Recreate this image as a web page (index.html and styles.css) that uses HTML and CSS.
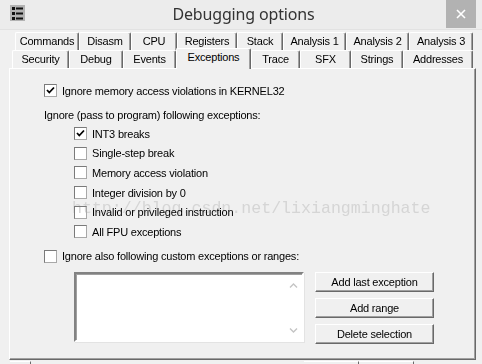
FILE: index.html
```html
<!DOCTYPE html>
<html lang="en">
<head>
  <meta charset="UTF-8" />
  <title>Debugging options</title>
  <link rel="stylesheet" href="styles.css">
</head>
<body>
  <div class="window">
    <div class="titlebar">
      <svg class="app-icon" width="15" height="16" viewBox="0 0 15 16">
        <rect width="15" height="16" fill="#b3b3b3"/>
        <rect x="2" y="2" width="3" height="3" fill="#111"/>
        <rect x="6" y="2.5" width="7" height="2" fill="#111"/>
        <rect x="2" y="7" width="3" height="3" fill="#111"/>
        <rect x="6" y="7.5" width="7" height="2" fill="#111"/>
        <rect x="2" y="12" width="3" height="3" fill="#111"/>
        <rect x="6" y="12.5" width="7" height="2" fill="#111"/>
      </svg>
      <div class="title">Debugging options</div>
      <div class="close">
        <svg width="10" height="10" viewBox="0 0 10 10">
          <path d="M1 1 L9 9 M9 1 L1 9" stroke="#fff" stroke-width="1.6"/>
        </svg>
      </div>
    </div>

    <div class="client">
      <div class="tabs">
        <div class="tabrow back">
          <div class="tab">Commands</div>
          <div class="tab">Disasm</div>
          <div class="tab">CPU</div>
          <div class="tab">Registers</div>
          <div class="tab">Stack</div>
          <div class="tab">Analysis 1</div>
          <div class="tab">Analysis 2</div>
          <div class="tab">Analysis 3</div>
        </div>
        <div class="tabrow front">
          <div class="tab">Security</div>
          <div class="tab">Debug</div>
          <div class="tab">Events</div>
          <div class="tab selected">Exceptions</div>
          <div class="tab">Trace</div>
          <div class="tab">SFX</div>
          <div class="tab">Strings</div>
          <div class="tab">Addresses</div>
        </div>
      </div>

      <div class="panel">
        <div class="row">
          <span class="check on"><svg width="11" height="11" viewBox="0 0 11 11"><path d="M2 5 L4.3 7.5 L9 2.5" fill="none" stroke="#000" stroke-width="1.8"/></svg></span>
          <span>Ignore memory access violations in KERNEL32</span>
        </div>

        <div class="caption">Ignore (pass to program) following exceptions:</div>

        <div class="sub">
          <div class="row">
            <span class="check on"><svg width="11" height="11" viewBox="0 0 11 11"><path d="M2 5 L4.3 7.5 L9 2.5" fill="none" stroke="#000" stroke-width="1.8"/></svg></span>
            <span>INT3 breaks</span>
          </div>
          <div class="row">
            <span class="check"></span>
            <span>Single-step break</span>
          </div>
          <div class="row">
            <span class="check"></span>
            <span>Memory access violation</span>
          </div>
          <div class="row">
            <span class="check"></span>
            <span>Integer division by 0</span>
          </div>
          <div class="row">
            <span class="check"></span>
            <span>Invalid or privileged instruction</span>
          </div>
          <div class="row">
            <span class="check"></span>
            <span>All FPU exceptions</span>
          </div>
        </div>

        <div class="row custom">
          <span class="check"></span>
          <span>Ignore also following custom exceptions or ranges:</span>
        </div>

        <div class="ranges">
          <div class="listbox">
            <div class="list-body"></div>
            <div class="scrollbar">
              <svg width="9" height="5" viewBox="0 0 9 5"><path d="M1 4.5 L4.5 1 L8 4.5" fill="none" stroke="#c4c4c4" stroke-width="1.4"/></svg>
              <svg width="9" height="5" viewBox="0 0 9 5"><path d="M1 0.5 L4.5 4 L8 0.5" fill="none" stroke="#c4c4c4" stroke-width="1.4"/></svg>
            </div>
          </div>
          <div class="buttons">
            <div class="button">Add last exception</div>
            <div class="button">Add range</div>
            <div class="button">Delete selection</div>
          </div>
        </div>
      </div>

      <div class="footer">
        <span class="btn-top first"></span>
        <span class="btn-top ok"></span>
        <span class="btn-top"></span>
      </div>
    </div>

    <div class="watermark">http://blog.csdn.net/lixiangminghate</div>
  </div>
</body>
</html>
```

FILE: styles.css
```css
body {
  margin: 0;
  width: 482px;
  height: 364px;
  overflow: hidden;
  background-color: #f0f0f0;
  font-family: "Liberation Sans", Arial, sans-serif;
  font-size: 11px;
  letter-spacing: -0.2px;
  color: #000;
}
.window {
  position: relative;
  height: 364px;
}

/* title bar */
.titlebar {
  height: 29px;
  display: flex;
  align-items: flex-start;
  background-color: #ececec;
  border-bottom: 1px solid #e2e2e2;
}
.app-icon {
  margin: 5px 0 0 10px;
}
.title {
  flex: 1;
  text-align: center;
  font-family: "Noto Sans", "Open Sans", sans-serif;
  font-size: 16px;
  letter-spacing: -0.15px;
  line-height: 29px;
  color: #333;
  padding-left: 16px;
}
.close {
  width: 30px;
  height: 28px;
  margin-right: 6px;
  background-color: #b2b2b2;
  display: flex;
  align-items: center;
  justify-content: center;
}

/* tabs */
.tabs {
  padding-top: 2px;
}
.tabrow {
  display: grid;
  height: 18px;
}
.tabrow.back {
  margin-left: 15px;
  grid-template-columns: 64px 52px 46px 60px 46px 63px 63px 64px;
}
.tabrow.front {
  margin-left: 12px;
  grid-template-columns: 57px 54px 53px 75px 49px 51px 52px 70px;
}
.tab {
  border-left: 1px solid #fff;
  border-top: 1px solid #fff;
  border-right: 1px solid #696969;
  box-shadow: inset -1px 0 0 #a0a0a0;
  border-radius: 2px 2px 0 0;
  text-align: center;
  line-height: 17px;
  white-space: nowrap;
  background-color: #f0f0f0;
}
.tab.selected {
  position: relative;
  z-index: 2;
  margin-top: -2px;
  margin-bottom: -1px;
  line-height: 16px;
}

/* tab page */
.panel {
  height: 275px;
  margin-left: 9px;
  width: 431px;
  padding: 15px 0 0 34px;
  border-top: 1px solid #fff;
  border-left: 1px solid #fff;
  border-right: 1px solid #696969;
  border-bottom: 1px solid #696969;
  box-shadow: inset -1px -1px 0 #a0a0a0;
}
.row {
  display: flex;
  align-items: center;
  gap: 5px;
  height: 13px;
  white-space: nowrap;
}
.check {
  width: 11px;
  height: 11px;
  flex: none;
  background-color: #fff;
  border: 1px solid #7a7a7a;
  border-right-color: #a8a8a8;
  border-bottom-color: #a8a8a8;
  display: flex;
}
.caption {
  margin-top: 12px;
  height: 13px;
  line-height: 13px;
}
.sub {
  margin: 2px 0 0 30px;
}
.sub .row {
  height: 19.6px;
}
.row.custom {
  margin-top: 8.4px;
}

.ranges {
  display: flex;
  gap: 11px;
  margin: 9px 0 0 30px;
}
.listbox {
  width: 226px;
  height: 66px;
  display: flex;
  background-color: #fff;
  border: 2px solid;
  border-color: #828282 #fff #fff #828282;
  box-shadow: inset 1px 1px 0 #a0a0a0, 1px 1px 0 #e3e3e3;
}
.list-body {
  flex: 1;
}
.scrollbar {
  width: 17px;
  display: flex;
  flex-direction: column;
  justify-content: space-between;
  align-items: center;
  padding: 9px 0 7px;
}
.buttons {
  display: flex;
  flex-direction: column;
  gap: 6px;
}
.button {
  width: 117px;
  height: 18px;
  line-height: 18px;
  text-align: center;
  border: 1px solid;
  border-color: #fff #696969 #696969 #fff;
  box-shadow: inset -1px -1px 0 #a0a0a0;
}

/* dialog buttons peeking out below the page */
.footer {
  display: flex;
  margin-top: 1px;
  height: 4px;
}
.btn-top {
  height: 4px;
  width: 54px;
  border-top: 1px solid #fff;
  border-right: 1px solid #696969;
}
.btn-top.first {
  width: 20px;
  margin-left: 10px;
}
.btn-top.ok {
  margin-left: 273px;
}

.watermark {
  position: absolute;
  left: 72px;
  top: 199px;
  font-family: "Liberation Mono", "DejaVu Sans Mono", monospace;
  font-size: 16.6px;
  letter-spacing: 0;
  color: #d5d5d5;
  mix-blend-mode: darken;
  pointer-events: none;
  white-space: nowrap;
}
```
